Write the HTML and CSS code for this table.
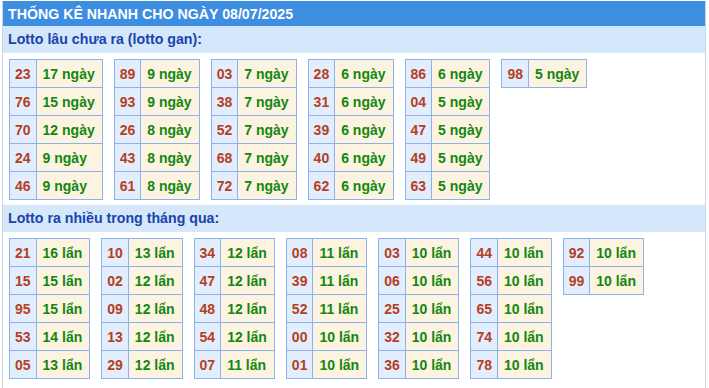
FILE: index.html
```html
<!DOCTYPE html>
<html lang="vi">
<head>
<meta charset="utf-8">
<title>Thống kê nhanh</title>
<link rel="stylesheet" href="styles.css">
</head>
<body>
<div class="box">
  <div class="head">THỐNG KÊ NHANH CHO NGÀY 08/07/2025</div>
  <div class="sub">Lotto lâu chưa ra (lotto gan):</div>
  <div class="grid">
    <table class="t"><tr><td class="n">23</td><td class="v">17 ngày</td></tr><tr><td class="n">76</td><td class="v">15 ngày</td></tr><tr><td class="n">70</td><td class="v">12 ngày</td></tr><tr><td class="n">24</td><td class="v">9 ngày</td></tr><tr><td class="n">46</td><td class="v">9 ngày</td></tr></table>
    <table class="t"><tr><td class="n">89</td><td class="v">9 ngày</td></tr><tr><td class="n">93</td><td class="v">9 ngày</td></tr><tr><td class="n">26</td><td class="v">8 ngày</td></tr><tr><td class="n">43</td><td class="v">8 ngày</td></tr><tr><td class="n">61</td><td class="v">8 ngày</td></tr></table>
    <table class="t"><tr><td class="n">03</td><td class="v">7 ngày</td></tr><tr><td class="n">38</td><td class="v">7 ngày</td></tr><tr><td class="n">52</td><td class="v">7 ngày</td></tr><tr><td class="n">68</td><td class="v">7 ngày</td></tr><tr><td class="n">72</td><td class="v">7 ngày</td></tr></table>
    <table class="t"><tr><td class="n">28</td><td class="v">6 ngày</td></tr><tr><td class="n">31</td><td class="v">6 ngày</td></tr><tr><td class="n">39</td><td class="v">6 ngày</td></tr><tr><td class="n">40</td><td class="v">6 ngày</td></tr><tr><td class="n">62</td><td class="v">6 ngày</td></tr></table>
    <table class="t"><tr><td class="n">86</td><td class="v">6 ngày</td></tr><tr><td class="n">04</td><td class="v">5 ngày</td></tr><tr><td class="n">47</td><td class="v">5 ngày</td></tr><tr><td class="n">49</td><td class="v">5 ngày</td></tr><tr><td class="n">63</td><td class="v">5 ngày</td></tr></table>
    <table class="t"><tr><td class="n">98</td><td class="v">5 ngày</td></tr></table>
  </div>
  <div class="sub">Lotto ra nhiều trong tháng qua:</div>
  <div class="grid last">
    <table class="t"><tr><td class="n">21</td><td class="v">16 lẩn</td></tr><tr><td class="n">15</td><td class="v">15 lẩn</td></tr><tr><td class="n">95</td><td class="v">15 lẩn</td></tr><tr><td class="n">53</td><td class="v">14 lẩn</td></tr><tr><td class="n">05</td><td class="v">13 lẩn</td></tr></table>
    <table class="t"><tr><td class="n">10</td><td class="v">13 lẩn</td></tr><tr><td class="n">02</td><td class="v">12 lẩn</td></tr><tr><td class="n">09</td><td class="v">12 lẩn</td></tr><tr><td class="n">13</td><td class="v">12 lẩn</td></tr><tr><td class="n">29</td><td class="v">12 lẩn</td></tr></table>
    <table class="t"><tr><td class="n">34</td><td class="v">12 lẩn</td></tr><tr><td class="n">47</td><td class="v">12 lẩn</td></tr><tr><td class="n">48</td><td class="v">12 lẩn</td></tr><tr><td class="n">54</td><td class="v">12 lẩn</td></tr><tr><td class="n">07</td><td class="v">11 lẩn</td></tr></table>
    <table class="t"><tr><td class="n">08</td><td class="v">11 lẩn</td></tr><tr><td class="n">39</td><td class="v">11 lẩn</td></tr><tr><td class="n">52</td><td class="v">11 lẩn</td></tr><tr><td class="n">00</td><td class="v">10 lẩn</td></tr><tr><td class="n">01</td><td class="v">10 lẩn</td></tr></table>
    <table class="t"><tr><td class="n">03</td><td class="v">10 lẩn</td></tr><tr><td class="n">06</td><td class="v">10 lẩn</td></tr><tr><td class="n">25</td><td class="v">10 lẩn</td></tr><tr><td class="n">32</td><td class="v">10 lẩn</td></tr><tr><td class="n">36</td><td class="v">10 lẩn</td></tr></table>
    <table class="t"><tr><td class="n">44</td><td class="v">10 lẩn</td></tr><tr><td class="n">56</td><td class="v">10 lẩn</td></tr><tr><td class="n">65</td><td class="v">10 lẩn</td></tr><tr><td class="n">74</td><td class="v">10 lẩn</td></tr><tr><td class="n">78</td><td class="v">10 lẩn</td></tr></table>
    <table class="t"><tr><td class="n">92</td><td class="v">10 lẩn</td></tr><tr><td class="n">99</td><td class="v">10 lẩn</td></tr></table>
  </div>
</div>
</body>
</html>
```

FILE: styles.css
```css
html, body {
  margin: 0;
  padding: 0;
  background: #ffffff;
}
body {
  font-family: "Liberation Sans", Arial, sans-serif;
  padding-top: 1px;
}
.box {
  margin-left: 2px;
  width: 702px;
  border-left: 1px solid #c6d7ec;
  border-right: 1px solid #c6d7ec;
  min-height: 387px;
}
.head {
  background: #3d8de0;
  color: #ffffff;
  font-weight: bold;
  font-size: 14.2px;
  height: 25px;
  line-height: 26px;
  padding-left: 5px;
}
.sub {
  background: #d4e7fb;
  color: #1a44ac;
  font-weight: bold;
  font-size: 14.2px;
  height: 27px;
  line-height: 27px;
  padding-left: 5px;
}
.grid {
  display: flex;
  flex-wrap: wrap;
  align-items: flex-start;
  gap: 11px;
  padding: 6px 6px 5px 6px;
}
.grid.last {
  padding-top: 6px;
}
.t {
  border-collapse: collapse;
  font-size: 14px;
  font-weight: bold;
}
.t td {
  border: 1px solid #8db1ef;
  height: 27px;
  line-height: 16px;
  padding: 0;
}
.t td.n {
  background: #e2edfd;
  color: #b53f1f;
  text-align: center;
  padding: 0 5px;
}
.t td.v {
  background: #fdf3e1;
  color: #13870f;
  text-align: left;
  padding: 0 7px 0 6px;
}
```
